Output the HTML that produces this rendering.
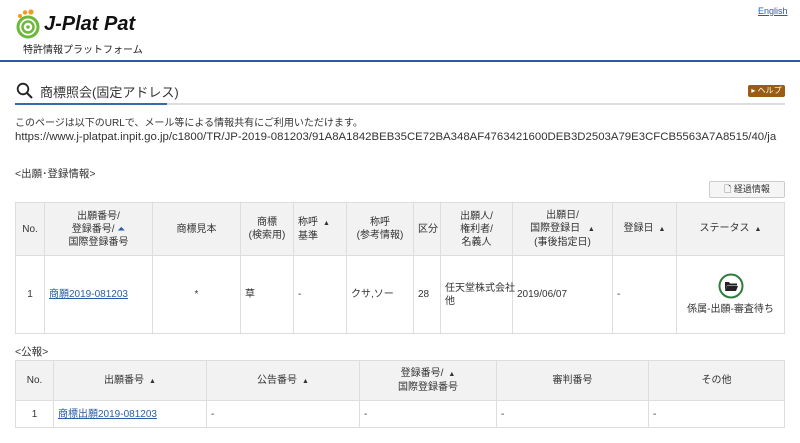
<!DOCTYPE html>
<html><head><meta charset="utf-8"><style>
*{margin:0;padding:0;box-sizing:border-box}
body{width:800px;height:443px;background:#fff;font-family:"Liberation Sans","Noto Sans CJK JP",sans-serif;color:#333;font-size:10px;position:relative;overflow:hidden}
.a{position:absolute;white-space:nowrap}
table{position:absolute;border-collapse:collapse;left:15px;width:770px;font-size:10px;table-layout:fixed}
td,th{border:1px solid #ddd;text-align:center;font-weight:normal;line-height:13px;padding:0 4px;white-space:nowrap}
th{background:#f2f2f2}
a{color:#2a5ca8;text-decoration:underline}
.l{text-align:left}
.tri{font-size:7px;margin-left:5px}
</style></head><body>
<svg class="a" style="left:14px;top:9px" width="30" height="30" viewBox="0 0 30 30">
<circle cx="6" cy="7" r="2" fill="#f39a1e"/><circle cx="11" cy="3.5" r="2.2" fill="#f39a1e"/><circle cx="17" cy="3" r="2.6" fill="#f39a1e"/>
<circle cx="14" cy="18" r="10" fill="none" stroke="#6cb83a" stroke-width="3"/>
<circle cx="14" cy="18" r="5.5" fill="none" stroke="#6cb83a" stroke-width="2.5"/>
<circle cx="14" cy="18" r="1.8" fill="#6cb83a"/>
</svg>
<div class="a" style="left:44px;top:13px;font-size:20px;font-weight:bold;font-style:italic;color:#111">J-Plat Pat</div>
<div class="a" style="left:23px;top:41px;font-size:10px;color:#222">特許情報プラットフォーム</div>
<div class="a" style="left:758px;top:6px;font-size:9px"><a>English</a></div>
<div class="a" style="left:0;top:60px;width:800px;height:2px;background:#2a5ba8"></div>
<svg class="a" style="left:16px;top:82px" width="18" height="18" viewBox="0 0 18 18"><circle cx="7" cy="7" r="5.3" fill="none" stroke="#222" stroke-width="1.8"/><path d="M11 11 L16 16" stroke="#222" stroke-width="2"/></svg>
<div class="a" style="left:40px;top:82px;font-size:13px;color:#333">商標照会(固定アドレス)</div>
<div class="a" style="left:15px;top:103px;width:770px;height:2px;background:#ddd"></div>
<div class="a" style="left:15px;top:103px;width:152px;height:2px;background:#3a68a8"></div>
<div class="a" style="left:748px;top:85px;width:37px;height:12px;background:#9a5b13;border-radius:2px;color:#fff;font-size:8px;line-height:12px;text-align:center">▸ ヘルプ</div>
<div class="a" style="left:15px;top:114px;font-size:10px">このページは以下のURLで、メール等による情報共有にご利用いただけます。</div>
<div class="a" style="left:15px;top:131px;font-size:11.4px">https://www.j-platpat.inpit.go.jp/c1800/TR/JP-2019-081203/91A8A1842BEB35CE72BA348AF4763421600DEB3D2503A79E3CFCB5563A7A8515/40/ja</div>
<div class="a" style="left:15px;top:166px;font-size:10.5px">&lt;出願･登録情報&gt;</div>
<div class="a" style="left:709px;top:181px;width:76px;height:17px;border:1px solid #ccc;border-radius:2px;background:#f5f5f5;font-size:9px;line-height:15px;text-align:center">🗋 経過情報</div>
<table style="top:202px">
<colgroup><col style="width:29px"><col style="width:108px"><col style="width:88px"><col style="width:53px"><col style="width:53px"><col style="width:67px"><col style="width:27px"><col style="width:72px"><col style="width:100px"><col style="width:64px"><col></colgroup>
<tr style="height:53px"><th>No.</th><th>出願番号/<br>登録番号/ <span style="color:#2a5ca8">⏶</span><br>国際登録番号</th><th>商標見本</th><th>商標<br>(検索用)</th><th class="l">称呼<span class="tri">▲</span><br>基準</th><th>称呼<br>(参考情報)</th><th>区分</th><th>出願人/<br>権利者/<br>名義人</th><th>出願日/<br>国際登録日 <span class="tri">▲</span><br>(事後指定日)</th><th>登録日<span class="tri">▲</span></th><th>ステータス<span class="tri">▲</span></th></tr>
<tr style="height:78px"><td>1</td><td class="l"><a>商願2019-081203</a></td><td>*</td><td class="l">草</td><td class="l">-</td><td class="l">クサ,ソー</td><td class="l">28</td><td class="l">任天堂株式会社<br>他</td><td class="l">2019/06/07</td><td class="l">-</td><td><svg width="26" height="26" viewBox="0 0 26 26" style="display:block;margin:0 auto 4px"><circle cx="13" cy="13" r="11.5" fill="#fff" stroke="#2e7d3a" stroke-width="2"/><path d="M7 9h4l1 1.5h7v2H9l-2 5z" fill="#222"/><path d="M9 13h11l-2 5H7z" fill="#222"/></svg>係属-出願-審査待ち</td></tr>
</table>
<div class="a" style="left:15px;top:344px;font-size:10.5px">&lt;公報&gt;</div>
<table style="top:360px">
<colgroup><col style="width:38px"><col style="width:153px"><col style="width:153px"><col style="width:137px"><col style="width:152px"><col></colgroup>
<tr style="height:40px"><th>No.</th><th>出願番号<span class="tri">▲</span></th><th>公告番号<span class="tri">▲</span></th><th>登録番号/<span class="tri">▲</span><br>国際登録番号</th><th>審判番号</th><th>その他</th></tr>
<tr style="height:27px"><td>1</td><td class="l"><a>商標出願2019-081203</a></td><td class="l">-</td><td class="l">-</td><td class="l">-</td><td class="l">-</td></tr>
</table>
</body></html>
